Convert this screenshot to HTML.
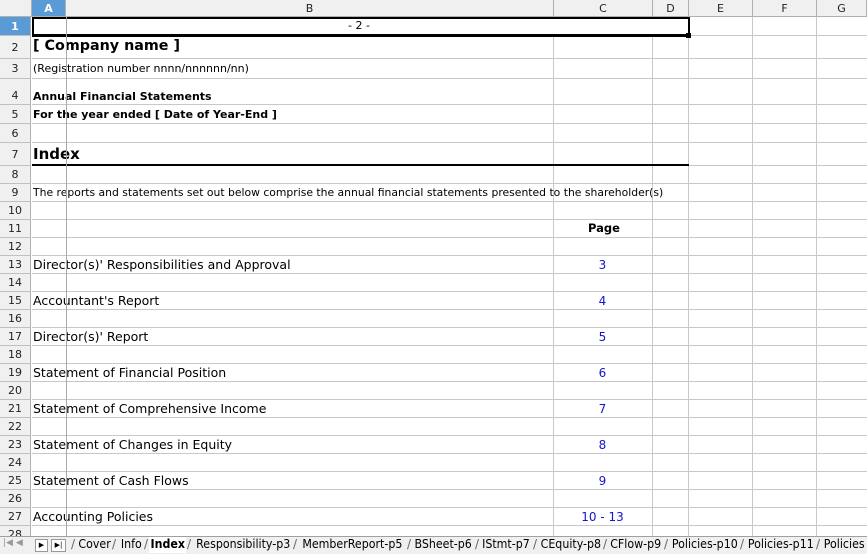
<!DOCTYPE html>
<html><head><style>
body{margin:0;width:867px;height:553px;overflow:hidden;background:#fff;font-family:"DejaVu Sans","Liberation Sans",sans-serif;position:relative}
.a{position:absolute}
.hl{position:absolute;height:1px;background:#c8c8c8}
.vl{position:absolute;width:1px;background:#c8c8c8}
.rh{position:absolute;left:0;width:31px;text-align:center;font-size:11px;color:#222;background:#f0f0f0;border-bottom:1px solid #c0c0c0;border-right:1px solid #b0b0b0;box-sizing:border-box}
.ch{position:absolute;top:0;height:17px;text-align:center;font-size:11px;line-height:17px;background:#f0f0f0;border-right:1px solid #b0b0b0;border-bottom:1px solid #b0b0b0;box-sizing:border-box;color:#222}
.t{position:absolute;white-space:nowrap;color:#000}
.b{color:#1414d0;font-size:12px}
.tab{position:absolute;top:537px;font-size:12px;height:16px;line-height:15px;white-space:nowrap}
</style></head><body>
<div class="ch" style="left:0;width:32px"></div>
<div class="ch" style="left:32px;width:34px;background:#5b9bd5;color:#fff;font-weight:bold">A</div>
<div class="ch" style="left:66px;width:488px">B</div>
<div class="ch" style="left:554px;width:99px">C</div>
<div class="ch" style="left:653px;width:36px">D</div>
<div class="ch" style="left:689px;width:64px">E</div>
<div class="ch" style="left:753px;width:64px">F</div>
<div class="ch" style="left:817px;width:50px">G</div>
<div id="rows"></div>
<script>
var b=[17,36,59,79,105,124,143,166,184,202,220,238,256];
for(var i=13;i<=28;i++)b.push(b[b.length-1]+18);
var h='';
for(var r=1;r<=28;r++){var y=b[r-1],e=b[r];
h+='<div class="rh" style="top:'+y+'px;height:'+(e-y)+'px;line-height:'+(e-y+ (r==4?8:0))+'px'+(r==1?';background:#5b9bd5;color:#fff;font-weight:bold':'')+'">'+r+'</div>';
h+='<div class="hl" style="left:32px;width:835px;top:'+(e-1)+'px"></div>';}
[553,652,688,752,816].forEach(function(x){h+='<div class="vl" style="left:'+x+'px;top:17px;height:519px"></div>'});
document.getElementById('rows').innerHTML=h;
</script>
<div class="a" style="left:32px;top:17px;width:654px;height:15px;border:2px solid #000;border-bottom-width:3px;background:#fff"></div>
<div class="a" style="left:686px;top:33px;width:5px;height:5px;background:#000"></div>
<div class="t" style="left:348px;top:19px;font-size:11px">- 2 -</div>
<div class="t" style="left:33px;top:38px;font-size:14.3px;font-weight:bold">[ Company name ]</div>
<div class="t" style="left:33px;top:62px;font-size:11px">(Registration number nnnn/nnnnnn/nn)</div>
<div class="t" style="left:33px;top:90px;font-size:11px;font-weight:bold">Annual Financial Statements</div>
<div class="t" style="left:33px;top:108px;font-size:11px;font-weight:bold">For the year ended [ Date of Year-End ]</div>
<div class="t" style="left:33px;top:145px;font-size:15px;font-weight:bold">Index</div>
<div class="a" style="left:32px;top:164px;width:657px;height:2px;background:#000"></div>
<div class="t" style="left:33px;top:186px;font-size:10.8px">The reports and statements set out below comprise the annual financial statements presented to the shareholder(s)</div>
<div class="t" style="left:588px;top:221px;font-size:11.5px;font-weight:bold">Page</div>
<div id="items"></div>
<script>
var it=[["Director(s)' Responsibilities and Approval","3"],["Accountant's Report","4"],["Director(s)' Report","5"],["Statement of Financial Position","6"],["Statement of Comprehensive Income","7"],["Statement of Changes in Equity","8"],["Statement of Cash Flows","9"],["Accounting Policies","10 - 13"]];
var s='';it.forEach(function(p,i){var y=257+i*36;
s+='<div class="t" style="left:33px;top:'+y+'px;font-size:12.5px">'+p[0]+'</div>';
s+='<div class="t b" style="left:553px;width:99px;text-align:center;top:'+(y+1)+'px">'+p[1]+'</div>';});
document.getElementById('items').innerHTML=s;
</script>
<div class="a" style="left:66px;top:17px;width:1px;height:519px;background:#a8a8a8"></div>
<div class="a" style="left:0;top:536px;width:867px;height:17px;background:#f0f0f0;border-top:1px solid #a0a0a0"></div>
<div class="t" style="left:3px;top:538px;font-size:9px;color:#999">|◀ ◀</div>
<div class="a" style="left:35px;top:539px;width:11px;height:11px;border:1px solid #999;background:#fff;font-size:7px;text-align:center;line-height:11px">▶</div>
<div class="a" style="left:51px;top:539px;width:13px;height:11px;border:1px solid #999;background:#fff;font-size:7px;text-align:center;line-height:11px">▶|</div>
<div id="tabs"></div>
<script>
var tb=[[76,113,"Cover"],[117,145,"Info"],[149,186,"Index",1],[192,292,"Responsibility-p3"],[298,404,"MemberReport-p5"],[412,472,"BSheet-p6"],[480,531,"IStmt-p7"],[538,601,"CEquity-p8"],[608,662,"CFlow-p9"],[669,737,"Policies-p10"],[745,813,"Policies-p11"],[821,867,"Policies"]];
var s3='';tb.forEach(function(t){var w=t[1]-t[0];
s3+='<div class="tab" style="left:'+t[0]+'px;width:'+w+'px;text-align:center;overflow:hidden;'+(t[3]?'font-weight:bold;background:#fff;':'')+'"><span style="display:inline-block;transform:scaleX(0.92)">'+t[2]+'</span></div>';
s3+='<div class="t" style="left:'+(t[0]-5)+'px;top:537px;font-size:12px;color:#666">/</div>';});
document.getElementById('tabs').innerHTML=s3;
</script>
</body></html>
